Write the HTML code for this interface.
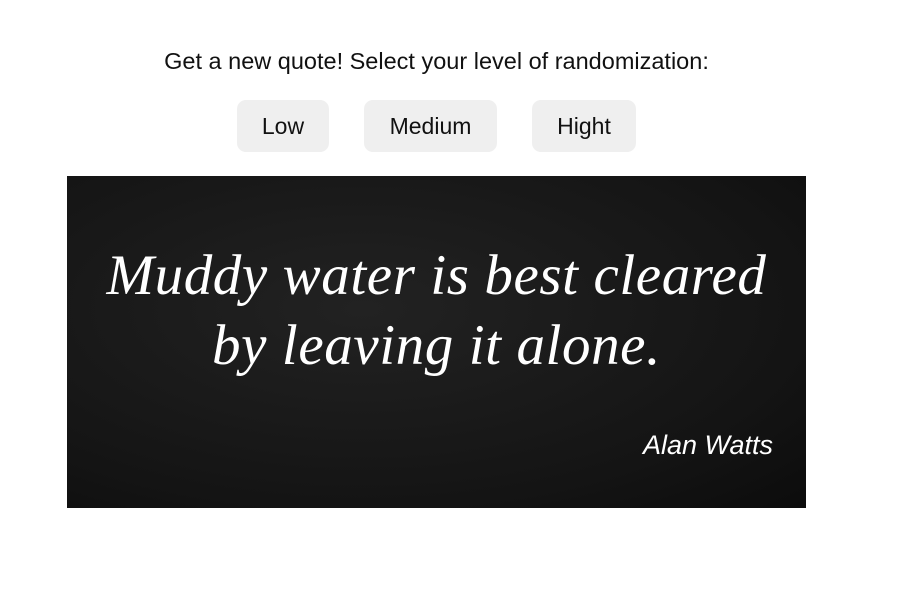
<!DOCTYPE html>
<html><head><style>
body{margin:0;width:903px;height:593px;background:#fff;font-family:"Liberation Sans",sans-serif;position:relative;overflow:hidden}
.t{position:absolute;top:48px;left:0;width:873px;text-align:center;font-size:23.5px;color:#111}
.b{position:absolute;top:100px;height:52px;background:#efefef;border-radius:9px;font-size:23px;line-height:52px;text-align:center;color:#111}
.img{position:absolute;left:67px;top:176px;width:739px;height:332px;background:radial-gradient(ellipse at 40% 40%,#222,#141414 70%,#0c0c0c)}
.q{position:absolute;top:241px;left:67px;width:739px;text-align:center;color:#fff;font-family:"Liberation Serif",serif;font-style:italic;font-size:57px;line-height:70px;letter-spacing:0.6px}
.a{position:absolute;top:430px;right:130px;color:#fff;font-style:italic;font-size:27px}
</style></head><body>
<div class="t">Get a new quote! Select your level of randomization:</div>
<div class="b" style="left:237px;width:92px">Low</div>
<div class="b" style="left:364px;width:133px">Medium</div>
<div class="b" style="left:532px;width:104px">Hight</div>
<div class="img"></div>
<div class="q">Muddy water is best cleared<br>by leaving it alone.</div>
<div class="a">Alan Watts</div>
</body></html>
